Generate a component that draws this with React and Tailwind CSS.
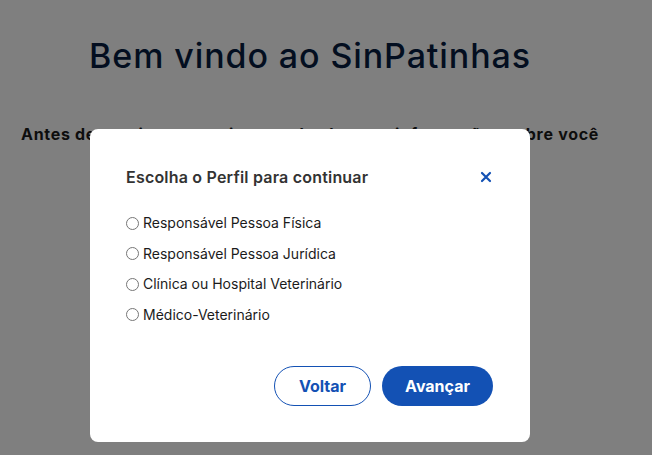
import React, { useState } from 'react';

const perfis = [
    'Responsável Pessoa Física',
    'Responsável Pessoa Jurídica',
    'Clínica ou Hospital Veterinário',
    'Médico-Veterinário',
];

const App = () => {
    const [perfil, setPerfil] = useState(null);

    return (
        <div className="relative min-h-[455px] bg-white font-['Inter','Noto_Sans',sans-serif]">
            <div className="w-[580px] ml-5 text-center">
                <h1 className="pt-[36px] text-[34px] leading-[40px] font-medium text-[#071d41] tracking-[0.9px]">Bem vindo ao SinPatinhas</h1>
                <p className="mt-[46px] text-[16px] font-bold text-[#1b1b1b] tracking-[0.7px] whitespace-nowrap">
                    Antes de continuar, precisamos de algumas informações sobre você
                </p>
            </div>

            <div className="fixed inset-0 bg-black/50" />

            <div className="absolute left-[90px] top-[129px] w-[440px] h-[313px] bg-white rounded-lg px-9 pt-[36px]">
                <div className="flex items-center justify-between">
                    <h2 className="text-[16px] font-semibold text-[#333333] tracking-[0.2px]">Escolha o Perfil para continuar</h2>
                    <button className="w-6 h-6 flex items-center justify-center text-[#1351b4] -mr-1">
                        <svg width="12" height="12" viewBox="0 0 12 12" fill="none" stroke="currentColor" strokeWidth="2.2" strokeLinecap="round">
                            <path d="M2 2 L10 10 M10 2 L2 10" />
                        </svg>
                    </button>
                </div>

                <div className="mt-[24px] flex flex-col gap-[10px]">
                    {perfis.map((p) => (
                        <label key={p} className="flex items-center gap-[4px] text-[14px] leading-[20.5px] text-[#1b1b1b] cursor-pointer">
                            <span className="w-[13px] h-[13px] rounded-full border border-[#767676] bg-white flex items-center justify-center">
                                {perfil === p && <span className="w-[7px] h-[7px] rounded-full bg-[#1351b4]" />}
                            </span>
                            <input type="radio" name="perfil" className="hidden" checked={perfil === p} onChange={() => setPerfil(p)} />
                            {p}
                        </label>
                    ))}
                </div>

                <div className="mt-[41px] flex justify-end gap-[11px] pr-[1px]">
                    <button className="w-[97px] h-[40px] rounded-full border border-[#1351b4] text-[#1351b4] font-bold text-[16px]">Voltar</button>
                    <button className="w-[111px] h-[40px] rounded-full bg-[#1351b4] text-white font-bold text-[16px]">Avançar</button>
                </div>
            </div>
        </div>
    );
};

export default App;
